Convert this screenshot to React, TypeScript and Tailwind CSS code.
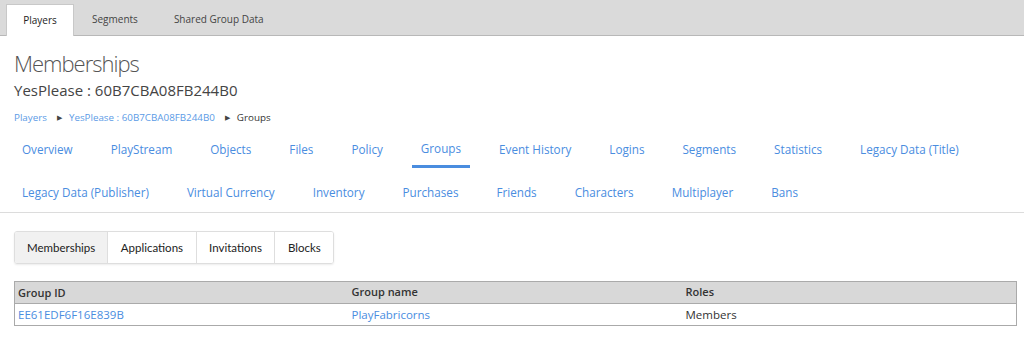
import React from "react";

const topTabs = ["Players", "Segments", "Shared Group Data"];

const navRows = [
  ["Overview", "PlayStream", "Objects", "Files", "Policy", "Groups", "Event History", "Logins", "Segments", "Statistics", "Legacy Data (Title)"],
  ["Legacy Data (Publisher)", "Virtual Currency", "Inventory", "Purchases", "Friends", "Characters", "Multiplayer", "Bans"],
];

const subTabs = ["Memberships", "Applications", "Invitations", "Blocks"];

export default function App() {
  return (
    <div className="w-[1024px] h-[344px] bg-white overflow-hidden" style={{ fontFamily: '"Open Sans", "Noto Sans", sans-serif' }}>
      {/* top tabs */}
      <div className="h-[36px] bg-[#dadada] border-b border-[#b8b8b8] flex items-end pl-[6px]">
        {topTabs.map((t, i) => (
          <div
            key={t}
            className={
              i === 0
                ? "h-[32px] w-[68px] -mb-px bg-white border-x border-t border-[#c8c8c8] flex items-center justify-center text-[10px] text-[#222]"
                : "h-[32px] px-[18px] flex items-center text-[10px] text-[#444]"
            }
          >
            {t}
          </div>
        ))}
      </div>

      <div className="px-[14px]">
        <h1 className="mt-[12px] text-[22px] leading-[30px] font-light tracking-[-1px] text-[#555]">Memberships</h1>
        <h2 className="mt-[2px] text-[15px] leading-[20px] text-[#444]">YesPlease : 60B7CBA08FB244B0</h2>
        <div className="mt-[11px] flex items-center gap-[7px] text-[9.8px] leading-[14px]">
          <span className="text-[#5b9be6]">Players</span>
          <span className="ml-[3px] text-[#444] text-[7px]">▶</span>
          <span className="text-[#5b9be6]">YesPlease : 60B7CBA08FB244B0</span>
          <span className="ml-[3px] text-[#444] text-[7px]">▶</span>
          <span className="text-[#333]">Groups</span>
        </div>
      </div>

      {/* player nav */}
      <div className="mt-[3px] border-b border-[#dcdcdc] pl-[13px]">
        <div className="flex gap-[20px] h-[40px]">
          {navRows[0].map((n) => (
            <div
              key={n}
              className={
                n === "Groups"
                  ? "px-[9px] h-[40px] flex items-center text-[11.7px] text-[#4a8ddf] border-b-[3px] border-[#4a8ddf] pt-[4px]"
                  : "px-[9px] h-[40px] flex items-center text-[11.7px] text-[#4a8ddf] pt-[3px]"
              }
            >
              {n}
            </div>
          ))}
        </div>
        <div className="flex gap-[20px] h-[44px]">
          {navRows[1].map((n) => (
            <div key={n} className="px-[9px] h-[44px] flex items-center text-[11.7px] text-[#4a8ddf] pt-[6px]">
              {n}
            </div>
          ))}
        </div>
      </div>

      {/* sub tabs */}
      <div className="px-[14px] pt-[18px]">
        <div
          className="inline-flex h-[33px] border border-[#dedede] rounded-[3px] shadow-[0_1px_2px_rgba(0,0,0,0.08)] overflow-hidden"
          style={{ fontFamily: 'Lato, "Open Sans", sans-serif' }}
        >
          {subTabs.map((s, i) => (
            <div
              key={s}
              className={
                (i === 0 ? "bg-[#f1f1f1] px-[12px] " : "bg-white border-l border-[#dedede] px-[12.5px] ") +
                "flex items-center text-[11.5px] text-[#222]"
              }
            >
              {s}
            </div>
          ))}
        </div>

        {/* table */}
        <table className="mt-[17px] w-[1003px] border border-[#aaa] border-collapse">
          <thead>
            <tr className="bg-[#d8d8d8] border-b border-[#aaa] text-[11px]">
              <th className="w-[334px] text-left font-semibold text-[#333] px-[3px] h-[22px] leading-[21px]">Group ID</th>
              <th className="w-[334px] text-left font-semibold text-[#333] px-[3px]">Group name</th>
              <th className="text-left font-semibold text-[#333] px-[3px]">Roles</th>
            </tr>
          </thead>
          <tbody className="text-[11.5px]">
            <tr>
              <td className="px-[3px] h-[22px] text-[#4a8ddf]">EE61EDF6F16E839B</td>
              <td className="px-[3px] text-[#4a8ddf]">PlayFabricorns</td>
              <td className="px-[3px] text-[#333]">Members</td>
            </tr>
          </tbody>
        </table>
      </div>
    </div>
  );
}
